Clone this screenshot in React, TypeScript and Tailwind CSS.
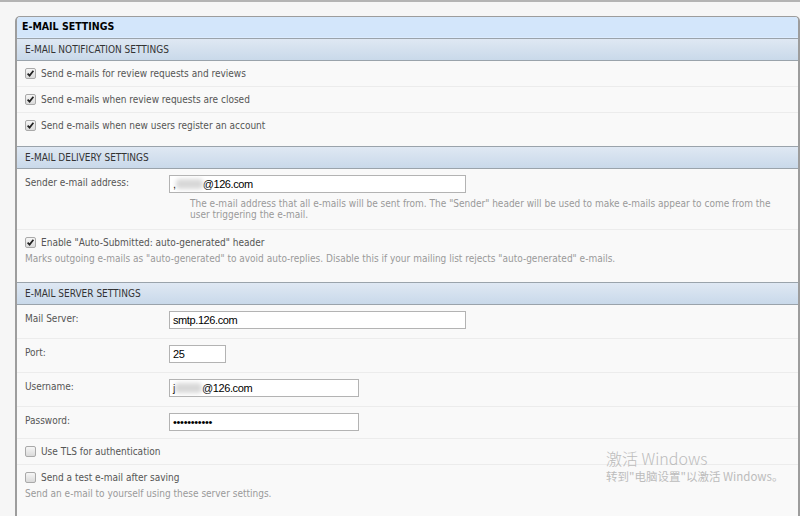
import React from 'react';

const Check = ({ checked }: { checked?: boolean }) => (
  <span className="inline-flex w-[11px] h-[11px] shrink-0 items-center justify-center rounded-[2px] border border-[#a9a9a9] bg-gradient-to-b from-[#f6f6f6] to-[#dadada]">
    {checked && (
      <svg width="9" height="9" viewBox="0 0 9 9">
        <path d="M1.6 4.6 L3.6 6.6 L7.4 1.8" fill="none" stroke="#222" strokeWidth="1.7" />
      </svg>
    )}
  </span>
);

const SubHeader = ({ title }: { title: string }) => (
  <div className="h-[23px] flex items-center px-[8px] border-y border-[#9aa3ab] bg-gradient-to-b from-[#dfe8f3] to-[#c9d9ea] text-[#333] text-[10px]">
    {title}
  </div>
);

const CheckRow = ({ label, checked, desc, last }: { label: string; checked?: boolean; desc?: string; last?: boolean }) => (
  <div className={`px-[8px] pt-[6px] pb-[6px] ${last ? '' : 'border-b border-[#ececec]'}`}>
    <div className="flex items-center gap-[5px] h-[13px]">
      <Check checked={checked} />
      <span className="text-[#555] text-[10px]">{label}</span>
    </div>
    {desc && <p className="mt-[3px] text-[#999] text-[10px] leading-[13px]">{desc}</p>}
  </div>
);

const Blurred = ({ lead }: { lead: string }) => (
  <>
    <span>{lead}</span>
    <span className="inline-block w-[27px] h-[10px] align-middle blur-[2px] bg-[#d8d8d8] rounded-sm" />
  </>
);

const FieldRow = ({ label, width, children, help, pb = 'pb-[9px]' }: { label: string; width: string; children: React.ReactNode; help?: string; pb?: string }) => (
  <div className={`flex px-[8px] pt-[6px] ${pb} border-b border-[#ececec]`}>
    <div className="w-[144px] pt-[1px] text-[#555] text-[10px] leading-[14px]">{label}</div>
    <div className="flex-1">
      <div className={`${width} h-[18px] border border-[#b3b3b3] bg-white flex items-center px-[3px] font-['Liberation_Sans',Arial,sans-serif] text-[11px] text-black tracking-[-0.4px]`}>
        {children}
      </div>
      {help && <p className="mt-[5px] ml-[21px] pr-[14px] text-[#999] text-[10px] leading-[11px]">{help}</p>}
    </div>
  </div>
);

export default function App() {
  return (
    <div className="relative min-h-[516px] bg-[#f6f6f6] border-t-2 border-[#b4b4b4] pt-[14px] pl-[15px] font-['DejaVu_Sans_Condensed','DejaVu_Sans',sans-serif]">
      <div className="border-l-2 border-r-2 border-t border-[#9d9d9d] rounded-t-[5px] bg-[#f9f9f9] min-h-[500px] overflow-hidden">
        <div className="h-[21px] flex items-center px-[5px] bg-[#d3e6fb] border-b border-[#dcecff] text-black text-[10.5px] font-bold">
          E-MAIL SETTINGS
        </div>

        <SubHeader title="E-MAIL NOTIFICATION SETTINGS" />
        <div className="pb-[8px]">
          <CheckRow checked label="Send e-mails for review requests and reviews" />
          <CheckRow checked label="Send e-mails when review requests are closed" />
          <CheckRow checked label="Send e-mails when new users register an account" last />
        </div>

        <SubHeader title="E-MAIL DELIVERY SETTINGS" />
        <div className="pb-[11px]">
          <FieldRow
            label="Sender e-mail address:"
            width="w-[297px]"
            pb="pb-[9px]"
            help={'The e-mail address that all e-mails will be sent from. The "Sender" header will be used to make e-mails appear to come from the user triggering the e-mail.'}
          >
            <Blurred lead="," />
            <span>@126.com</span>
          </FieldRow>
          <CheckRow
            checked
            last
            label={'Enable "Auto-Submitted: auto-generated" header'}
            desc={'Marks outgoing e-mails as "auto-generated" to avoid auto-replies. Disable this if your mailing list rejects "auto-generated" e-mails.'}
          />
        </div>

        <SubHeader title="E-MAIL SERVER SETTINGS" />
        <div>
          <FieldRow label="Mail Server:" width="w-[297px]">smtp.126.com</FieldRow>
          <FieldRow label="Port:" width="w-[57px]">25</FieldRow>
          <FieldRow label="Username:" width="w-[190px]">
            <Blurred lead="j" />
            <span>@126.com</span>
          </FieldRow>
          <FieldRow label="Password:" width="w-[190px]" pb="pb-[7px]">
            <span className="text-[11px] tracking-[-0.3px]">•••••••••••</span>
          </FieldRow>
          <CheckRow label="Use TLS for authentication" />
          <CheckRow label="Send a test e-mail after saving" desc="Send an e-mail to yourself using these server settings." last />
        </div>
      </div>

      <div className="absolute left-[606px] top-[446px] text-[#bcbcbc] font-['Noto_Sans_CJK_SC',sans-serif] pointer-events-none">
        <div className="text-[16px] leading-[20px] font-light">激活 Windows</div>
        <div className="text-[11.5px] leading-[16px]">转到"电脑设置"以激活 Windows。</div>
      </div>
    </div>
  );
}
